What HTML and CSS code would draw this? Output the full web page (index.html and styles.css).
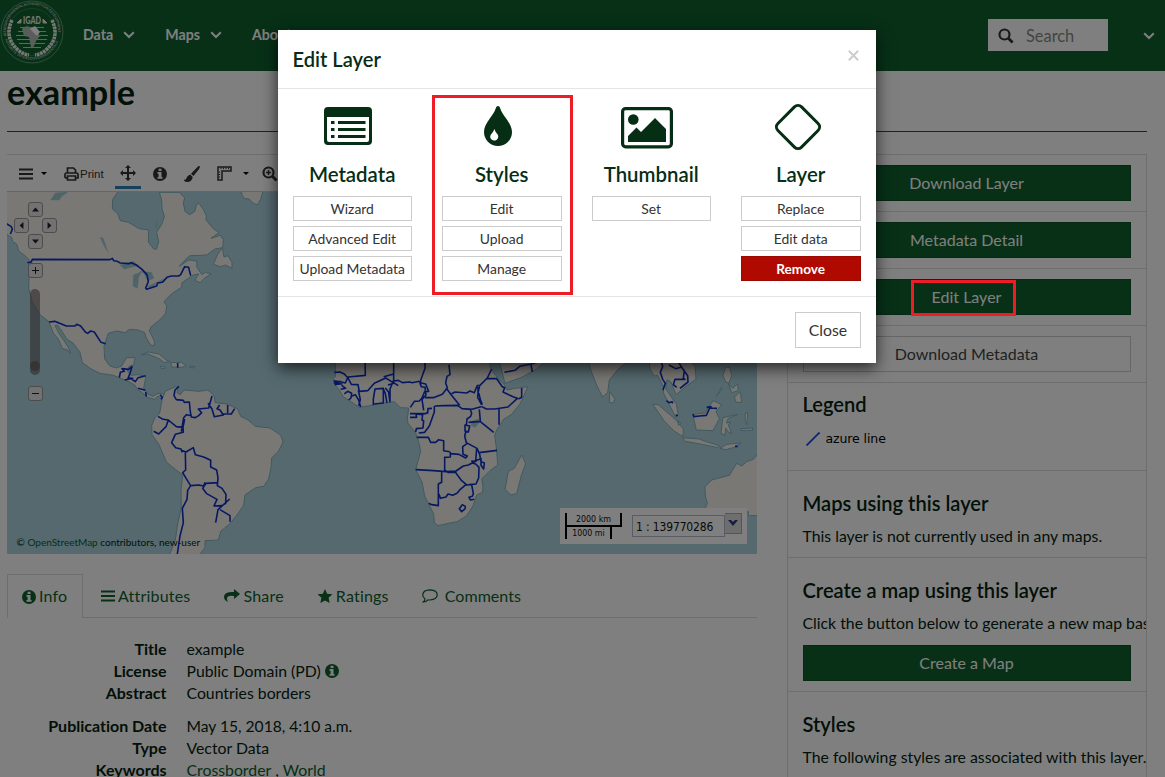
FILE: index.html
```html
<!DOCTYPE html>
<html lang="en">
<head>
<meta charset="utf-8">
<title>example</title>
<link rel="stylesheet" href="styles.css">
</head>
<body>
<svg class="defs" width="0" height="0">
  <symbol id="chev" viewBox="0 0 12 8"><path d="M1.2 1.2 6 6l4.800-4.800" fill="none" stroke="currentColor" stroke-width="2"/></symbol>
  <symbol id="info" viewBox="0 0 14 14"><path fill="currentColor" fill-rule="evenodd" d="M7 0a7 7 0 1 0 0 14A7 7 0 0 0 7 0zM5.600 1.800h2.900v2.100H5.600zM4.500 5h4v5h1v1.700H4.500V10h1.100V6.700H4.500z"/></symbol>
  <symbol id="bars" viewBox="0 0 14 12"><path fill="currentColor" d="M0 .5h14v2H0zM0 5h14v2H0zM0 9.500h14v2H0z"/></symbol>
  <symbol id="glass" viewBox="0 0 16 16"><circle cx="6.500" cy="6.500" r="5" fill="none" stroke="currentColor" stroke-width="2.200"/><path d="m10.300 10.300 4.300 4.300" stroke="currentColor" stroke-width="2.800"/></symbol>
</svg>
<header class="nav">
  <svg class="logo" viewBox="0 0 64 64" fill="none" stroke="#e8eee9">
    <circle cx="32" cy="32" r="31" stroke-width="1" opacity=".4"/>
    <circle cx="32" cy="32" r="23.500" stroke-width=".5" opacity=".4"/>
    <path id="ring" d="M6.500 36A26 26 0 1 1 57.500 36"/>
    <path id="ring2" d="M5 39A28 28 0 0 0 59 39" stroke="none"/>
    <g class="ring-text"><text><textPath href="#ring" textLength="88">INTERGOVERNMENTAL AUTHORITY ON DEVELOPMENT</textPath></text><text><textPath href="#ring2" textLength="70">AUTORITÉ INTERGOUVERNEMENTALE</textPath></text></g>
    <path d="M20 27.500h24M18 31.500h28M16 35.500h32M17 39.500h30M19 43.500h26M23 47.500h18" stroke-width="1.100" opacity=".8"/>
    <path d="M12 20q-8 17 5 29 5 5 12 6M52 20q8 17-5 29-5 5-12 6" stroke-width="3.600" stroke-dasharray="2.800 .6"/>
    <path d="M17 23h4v-4zM47 23h-4v-4z" fill="#e8eee9"/>
    <path d="M22 29q3-4 8-2l4 2 6 7-4 5-3 7-2-1-2-10-5-1z" fill="#b4bdb7" stroke="none"/>
    <path d="m30 29 5-3 5 6-3 4z" fill="#fff" stroke="none"/>
    <text class="logo-name" x="23" y="24" textLength="18" lengthAdjust="spacingAndGlyphs">IGAD</text>
  </svg>
  <nav class="menu">
    <a>Data <svg><use href="#chev"/></svg></a>
    <a>Maps <svg><use href="#chev"/></svg></a>
    <a>About</a>
  </nav>
  <div class="search"><svg><use href="#glass"/></svg><span>Search</span></div>
  <svg class="user"><use href="#chev"/></svg>
</header>
<main class="page">
  <h1>example</h1>
  <div class="cols">
    <section class="left">
      <div class="toolbar">
        <svg class="t-bars"><use href="#bars"/></svg><i class="caret"></i>
        <svg class="t-print" viewBox="0 0 15 14"><path d="M3.500 6V1h6l2 2v3M1 11V7.500q0-1.500 1.500-1.500h10Q14 6 14 7.500V11h-2.500M3.500 9h8v4h-8zM3 11H1" fill="none" stroke="currentColor" stroke-width="1.700"/></svg><span class="print">Print</span>
        <span class="pan"><svg viewBox="0 0 16 16"><path fill="currentColor" d="m8 0 3 3H9v4h4V5l3 3-3 3V9H9v4h2l-3 3-3-3h2V9H3v2L0 8l3-3v2h4V3H5z"/></svg></span>
        <svg class="t-info"><use href="#info"/></svg>
        <svg class="t-brush" viewBox="0 0 16 16"><path fill="currentColor" d="M15.700.3q.7.800-1 3.200L9.500 10 7 7.700 13 1.500Q14.900-.4 15.700.3M6.300 8.500 8.700 11Q8 16 3 16-.3 16 0 13.500q2 1 2.500-1.500t3.800-3.500"/></svg>
        <svg class="t-ruler" viewBox="0 0 15 15"><path d="M1 1h13v4H5v9H1z" fill="none" stroke="currentColor" stroke-width="1.500"/><path d="M4 1.500v1.700m2.500-1.700v1.700m2.500-1.700v1.700m2.500-1.700v1.700M1.500 6h1.700M1.500 8.500h1.700M1.500 11h1.700" stroke="currentColor"/></svg><i class="caret c2"></i>
        <svg class="t-zoom" viewBox="0 0 16 16"><use href="#glass"/><path d="M4 6.500h5M6.500 4v5" stroke="currentColor" stroke-width="1.500"/></svg>
      </div>
      <div class="map">
        <svg class="world" viewBox="7 191 750 363">
          <g transform="translate(0 140) scale(.33333)">
            <g class="land">
              <path d="M15 140V280L35 292 38 305 50 312 56 333 75 347 94 366 85 375 88 388 86 445 97 486 120 524 147 545 160 580 175 597 187 625 203 630 212 641 206 624 190 599 178 582 165 557 172 555 187 575 200 597 220 610 240 637 247 668 275 688 300 700 340 706 360 714 384 724 404 735 414 750 427 758 445 773 465 778 474 768 487 777 491 762 474 760 459 769 442 762 431 744 438 709 415 704 393 706 382 694 386 680 401 674 405 653 380 653 365 678 350 684 330 678 314 657 312 619 325 580 350 573 375 578 388 568 414 570 434 578 440 596 453 616 463 617 463 603 448 573 453 561 481 538 497 520 500 497 492 486 500 476 518 459 545 442 546 428 580 405 597 402 584 421 600 428 614 414 634 402 616 397 606 404 591 383 590 363 566 360 538 379 557 358 570 347 605 346 620 345 645 327 668 323 670 299 661 286 633 295 657 278 640 266 618 240 619 228 610 208 597 190 590 193 584 215 568 224 555 214 550 189 554 174 538 157H478L485 180 486 206 493 229 486 251 470 277 476 305 469 328 460 326 445 306 446 270 418 266 385 247 361 242 353 220 337 207 338 178 354 155V140Z"/>
              <path d="m640 373 13-30 14-20 5 28 12-4 12 20v18l-20-10-15 5z"/><path d="m722 155 10 20 17 3 8 10 15 7 10-17 7-25zM425 644l20-8 32 6 22 18 12 5-20 2-12-10-35-15zM480 680l12 0 5 4-12 2zM512 668l32-1 15 11-15 4-28-1zM570 678l15 2-3 4-14-2z"/>
              <path d="M487 775 496 754 526 740 534 744 531 758 541 764 552 750 598 754 624 750 643 768 645 788 681 792 713 807 722 829 744 840 766 859 810 864 842 885 849 906 836 933 815 954 813 983 806 1017 791 1039 767 1043 735 1065 731 1096 713 1122 690 1151 663 1173 655 1200 615 1202 615 1223 597 1246H508L526 1200 533 1152 544 1102 543 1055 548 1005 526 988 499 966 477 914 456 884 455 857 465 832 479 820Z"/>
            </g>
            <g class="lakes"><path d="M152 180 166 159 205 155 184 170 178 180zM300 292l10 3 14 42-12-20zM360 375l40-11 15 13-30 7-12 4zM400 405l25-10-9 17-3 33-14-6zM419 394l35 3 8 17-18 9-13-24zM440 440l33-14-15 16zM470 428l20-12-6 10zM462 263l10-20v18z"/></g>
            <g class="borders">
              <path d="M18 250 34 260 37 268 31 282M82 368 94 366 97 358 330 359 337 355 341 362 352 364 361 369 386 371 394 368 409 375 426 388 441 404 445 425 437 444 440 448 470 438 473 429 487 427 501 412 514 408 536 408 542 404 554 380 566 382 572 407M147 546 164 544 199 558H225L230 553 242 558 256 576 263 580 272 573 283 576 303 607 317 611"/>
              <path d="M358 713l3-16 12-3-7-8 20 2 10-8-6 20-6 15 14 0-24 5M388 713l18 12 8-12 23-6M414 745l22 6M437 756l2 14M480 764l7 8-4 6M533 669v14"/>
              <path d="M537 739 525 750 522 767 529 779 550 781 553 787 568 786 571 816 574 831 586 833 596 827 605 818 595 807 626 804 636 768M474 829l15 9 16 2-7 20-22 22-15-8M505 840l24 20 20 2 1 15-24 6-11 25 12 15 16 4 4 10M544 875l7-42 8-9 16 3M549 861l5-24M624 790l12 17 7 23 27-5-10-15-9-4 8-11M683 795v24M670 822h24l10-16M544 931l14 5 22-13 6 21 25 7 21 10v20l18 9 4 23-2 24 14 8 12 18-1 27-11 7-24 1 9-20-31-17-12-16 10-15 34-2M556 936l1 54-9 8 14 23 10 16 24-2 15 3 4-11M572 1037l-9 14-2 27-14 27 3 43-10 40-8 54M689 1077l-35 32-7 39M660 1109l30 18v18"/>
            </g>
          </g>
          <g transform="translate(270 350) scale(.33333)">
            <g class="land"><path d="M196 30V80L190 86 196 106 207 119 220 140 234 149 268 172 305 166 318 161 352 158 373 155 391 173 416 174 412 206 414 220 436 247 446 275 452 304 437 360 456 396 464 438 491 492 493 517 504 527 535 520 562 515 590 497 609 468 620 435 638 427 639 408 635 387 660 362 683 345 680 300 674 256 680 240 702 207 725 193 750 162 774 110 735 115 711 120 702 103 684 85 665 60 655 30ZM687 30l18 70 50-18 45-25 30-27zM755 315l12 26-13 35-14 55-18 4-17-17 4-20 6-34 18-9z"/></g>
            <g class="lakes"><path d="m604 214 22-8v14l-10 12-12-5zM586 240l5 22M585 267l3 14"/></g>
            <g class="borders">
              <path d="M285 30l1 46-52 5-8 18-15-4-20-3M193 67l17-1 13 6 11 12 10 19 20 1 4 20 25-2 20-22 34-16 8 5 30 18M192 96l23 6-22-3 20-5M194 104l20-3M215 106l12 9-15 3M223 132l10-8 12 6-2 14-7 6M246 138l10-4 10 16 6 21M265 120l6 29-5 18M310 166v-19l5-30 25-2v44l-27 3M340 117l6 14 5 28M346 114l10 13 4 30M371 30v42l-30 8M371 72v28l-17 5M360 155v-38l10-24 15-2 12 7 22-2 8 2 20-4 10 6 10 2 9 22-12 1-8 19-8 9-15 1-12 18M465 30v25l-12 33-3 12 4 10 11 2 3 23-12 13 5 33M465 143l25 0 27-10 15-20-5-14 4-20 9-5-3-30M530 116l14 19 25 31M545 131l10-5 35 3 10-6 13 5 8-20 5-3M624 111v15l3 6 5 20 5 12M665 57l-13 27-23 23-5 22-1 13 12 23M648 86h32l17 24 7 3-5 13 30 14 13 5-28 26-40 6-25 0-15-8M755 114v28l-10 5M494 168l29-1 40-1 13 10 30 2 27-8M493 168v18l-15 42-14 19-18 2M473 191l1-15 12-1M420 191l47 0 6-5M420 202l20 0-2-10 20 2-2 16 5 2-2 22-20 2-2 10M440 262h35l7 15 15 0 9-8 15 3v30l18 3M541 305v16l-17 1 0 38 10 7 25 0M601 179l4 11-3 9-11 8-2 21M628 178l3 36-35 3M631 215l40 32M687 177v47M585 225l14 3-4 18-10-3zM588 243l-4 15 5 20 32 17 8 18 4 22 10 4-2 18-8-11 0-20-28 10M591 281l-13 9 1 23 13 5-5 6-20-11-26-2M627 308l54-7M437 359l54 3 37 3 30-2 22-15 15-3 25-13M620 295l-3 38M515 367v30l-10 5v65l-20-3-9-4M507 432l4 13 17-4 6-9 14 4 13-6 10-12 14-12 12-2 21-2 8-18 1-32-10-10-8-2-4-9M556 366l9 13 10 13 17 14M605 404l5 27-3 8-10 3 4 8 12-2M577 464l9 5-1 8-10 8-7-9zM703 67l32-6 14-12 35-7 20-7M783 44l4 22"/>
            </g>
          </g>
          <g transform="translate(540 350) scale(.33333)">
            <g class="land"><path d="M144 30 154 65 172 110 188 141 203 127 208 90 234 58 270 30ZM209 124l16 24-6 11-11-2zM329 30v24l13 24 11-2 17 34 1 20 14 28 22 43 8-7-6-31-32-47 4-27 12 7 15 38 32-27 28-19-2-37-25-30V30ZM338 162l18 3 52 45 22 27-1 23-27-17-30-31zM428 263l50 4 18 7 42 13-4 6-43-9-55-10zM458 193l37-4 24-37 26 12-17 20 10 22-19 36-50-2zM540 295l20-12 43-4-20 13-25 7zM495 475 502 460 496 438 495 410 515 390 568 376 590 340 605 348 620 335 640 328 657 308V497H625V485L500 475ZM557 52h12l6 25-8 22-10-3-8-21zM583 142l18-18 4 33-17 0zM565 100l13 15 15-13 2 20-20 6zM528 139l17-27-1 8-15 20zM549 203l45-10-30 13-5 13 14-2-8 7 10 27-10-5-8-12-2 22-12-6 4-35zM615 190l8-2-2 36-5-14zM603 236l35-2-1 7-34 0zM415 211l7 11-7 4z"/></g>
            <g class="borders"><path d="M363 30l5 20-7 17 7 21 8 12-7 20M379 152l8 6 9-3 2 5M407 196h7M387 45l20 11 17-5 9 11-3 22 5 4h-30l-5 16 10 8M420 115l24-19-1-19-18-25-13-22M459 192l3 8 17-2 20-2 10-22 22 1M500 172l15-2M585 289h8"/></g>
          </g>
        </svg>
        <div class="zoomer">
          <b class="z up"><svg viewBox="0 0 9 5"><path d="m0 5 4.500-5L9 5z"/></svg></b><b class="z lf"><svg viewBox="0 0 5 9"><path d="M5 0 0 4.500 5 9z"/></svg></b><b class="z rt"><svg viewBox="0 0 5 9"><path d="m0 0 5 4.500L0 9z"/></svg></b><b class="z dn"><svg viewBox="0 0 9 5"><path d="m0 0 4.500 5L9 0z"/></svg></b>
          <b class="z in"><svg viewBox="0 0 7 7"><path d="M0 3h7v1H0zM3 0h1v7H3z"/></svg></b><span class="track"><i></i></span><b class="z out"><svg viewBox="0 0 7 7"><path d="M0 3h7v1H0z"/></svg></b>
        </div>
        <div class="credit">© <a>OpenStreetMap</a> contributors, new-user</div>
        <div class="scale">
          <div class="bars"><span class="km">2000 km</span><span class="mi">1000 mi</span></div>
          <span class="ratio">1 : 139770286</span><span class="drop"><svg viewBox="0 0 10 7"><path d="M0 0h3l2 2 2-2h3L5 6z" fill="#2a3f76"/></svg></span>
        </div>
      </div>
      <div class="tabs">
        <a class="tab on"><svg><use href="#info"/></svg><span>Info</span></a>
        <a class="tab attr"><svg><use href="#bars"/></svg><span>Attributes</span></a>
        <a class="tab share"><svg viewBox="0 0 16 14"><path fill="currentColor" d="M10 0 16 5l-6 5V7Q3 6 3 9.500q0 2 1 3.500Q0 11 0 8q0-5.500 10-5z"/></svg><span>Share</span></a>
        <a class="tab rate"><svg viewBox="0 0 16 15"><path fill="currentColor" d="m8 0 2.300 5 5.700.6-4.200 3.800L13 15l-5-2.800L3 15l1.200-5.600L0 5.600 5.700 5z"/></svg><span>Ratings</span></a>
        <a class="tab comm"><svg viewBox="0 0 16 14"><path fill="none" stroke="currentColor" stroke-width="1.200" d="M8 .8q7.200.4 7.200 5T8 11q-1 0-2-.2Q4 13 1.300 13q1.700-1.300 1.700-3.200Q.8 8.500.8 6 .8 1 8 .8z"/></svg><span>Comments</span></a>
      </div>
      <dl class="meta">
        <dt>Title</dt><dd>example</dd>
        <dt>License</dt><dd>Public Domain (PD) <svg><use href="#info"/></svg></dd>
        <dt>Abstract</dt><dd>Countries borders</dd>
        <dt class="gap">Publication Date</dt><dd class="gap date">May 15, 2018, 4:10 a.m.</dd>
        <dt>Type</dt><dd>Vector Data</dd>
        <dt>Keywords</dt><dd><a>Crossborder</a> , <a>World</a></dd>
      </dl>
    </section>
    <aside class="right">
      <div class="item"><a class="btn green">Download Layer</a></div>
      <div class="item"><a class="btn green">Metadata Detail</a></div>
      <div class="item"><a class="btn green">Edit Layer</a></div>
      <div class="item"><a class="btn plain">Download Metadata</a></div>
      <div class="item legend"><h4>Legend</h4><p><svg viewBox="0 0 14 14"><path d="M.5 13.500 13.500.5" stroke="#2347dc" stroke-width="1.800"/></svg>azure line</p></div>
      <div class="item used"><h4>Maps using this layer</h4><p>This layer is not currently used in any maps.</p></div>
      <div class="item create"><h4>Create a map using this layer</h4><p>Click the button below to generate a new map based on this layer.</p><a class="btn green">Create a Map</a></div>
      <div class="item sty"><h4>Styles</h4><p>The following styles are associated with this layer.</p></div>
    </aside>
  </div>
</main>
<div class="backdrop"></div>
<div class="mark mark-edit"></div>
<div class="modal">
  <div class="m-head"><h4>Edit Layer</h4><svg viewBox="0 0 11 11"><path d="m.8.800 9.400 9.400M10.200.800.8 10.200" stroke="#ccc" stroke-width="2"/></svg></div>
  <div class="m-body">
    <div class="col"><div class="ico"><svg class="i-meta" viewBox="0 0 48 38"><path fill="currentColor" fill-rule="evenodd" d="M4 0h40q4 0 4 4v30q0 4-4 4H4q-4 0-4-4V4q0-4 4-4M3 10v23q0 2 2 2h38q2 0 2-2V10z"/><path d="M7 15.500h3.500m3.500 0h27.500M7 22.500h3.500m3.500 0h27.500M7 29.500h3.500m3.500 0h27.500" stroke="currentColor" stroke-width="3"/></svg></div><h4>Metadata</h4><a>Wizard</a><a>Advanced Edit</a><a>Upload Metadata</a></div>
    <div class="col"><div class="ico"><svg class="i-drop" viewBox="0 0 28 40"><path fill="currentColor" fill-rule="evenodd" d="M14 0q1.600 0 2.200 2.200C18.200 9.500 28 17 28 26a14 14 0 0 1-28 0C0 17 9.800 9.500 11.800 2.200Q12.400 0 14 0M10.400 23q-.7 2.200-2.400 4.300A4 4 0 1 0 13.300 28q-2.200-2.500-2.900-5"/></svg></div><h4>Styles</h4><a>Edit</a><a>Upload</a><a>Manage</a><div class="mark mark-styles"></div></div>
    <div class="col"><div class="ico"><svg class="i-pic" viewBox="0 0 52 42"><rect x="1.600" y="1.600" width="48.800" height="38.200" rx="3" fill="none" stroke="currentColor" stroke-width="3.200"/><circle cx="12.300" cy="12.500" r="5.300" fill="currentColor"/><path fill="currentColor" d="M7 35v-6l8.500-8.500 4.500 4.500 14-14 11 11v13z"/></svg></div><h4>Thumbnail</h4><a>Set</a></div>
    <div class="col"><div class="ico"><svg class="i-dia" viewBox="0 0 48 48"><rect x="7.300" y="7.300" width="33.400" height="33.400" rx="5" transform="rotate(45 24 24)" fill="none" stroke="currentColor" stroke-width="3"/></svg></div><h4>Layer</h4><a>Replace</a><a>Edit data</a><a class="danger">Remove</a></div>
  </div>
  <div class="m-foot"><a>Close</a></div>
</div>
</body>
</html>
```
FILE: styles.css
```css
* { box-sizing: border-box; }
body { margin: 0; width: 1165px; height: 777px; overflow: hidden; position: relative; background: #fff; color: #04220f; font: 15.800px/22px Lato, sans-serif; font-variant-ligatures: none; }
h1, h4, p, dl, dd { margin: 0; }
svg { display: block; flex: none; }
.defs { position: absolute; }
.nav { height: 71px; background: #0e602e; display: flex; align-items: center; color: #fff; }
.logo { width: 64px; height: 64px; margin-top: -7px; }
.ring-text, .logo-name { fill: #e8eee9; stroke: none; font: 700 3.500px Lato, sans-serif; }
.ring-text { opacity: .75; }
#ring { stroke: none; }
.logo-name { font-size: 11px; font-weight: 900; }
.menu { display: flex; gap: 30px; margin: -1px 0 0 19px; font-weight: 700; font-size: 14.200px; }
.menu a { display: flex; align-items: center; gap: 10px; }
.menu svg, .user { width: 12px; height: 8px; }
.search { margin: -2px 0 0 auto; width: 120px; height: 32px; background: #fff; display: flex; align-items: center; padding: 3px 0 0 10px; gap: 12px; color: #888; font-size: 16.400px; }
.search svg { width: 16px; height: 16px; color: #333; margin-top: -1px; }
.user { margin: 0 10px 0 35px; }
.page { padding: 0 18px 0 7px; }
h1 { height: 61px; border-bottom: 1px solid #0e602e; font-size: 34.200px; line-height: 42px; font-weight: 700; }
.cols { display: flex; gap: 30px; margin-top: 22px; }
.left { width: 750px; }
.toolbar { height: 38px; border-top: 1px solid #d8dde4; border-bottom: 1px solid #ccc; display: flex; align-items: center; padding: 1px 0 0 12px; color: #333; }
.t-bars { width: 14px; height: 12px; }
.caret { border: 3px solid transparent; border-top-color: #000; border-bottom: 0; margin-left: 8px; }
.t-print { width: 15px; height: 14px; margin-left: 17px; }
.print { font: 11.500px "Liberation Sans", sans-serif; width: 24px; margin: 1px 0 0 1px; }
.pan { align-self: stretch; width: 26px; border-bottom: 3px solid #2a83b8; margin: 3px 0 2px 11px; display: grid; place-items: center; }
.pan svg { width: 16px; height: 16px; }
.t-info { width: 14px; height: 14px; margin-left: 12px; }
.t-brush { width: 16px; height: 16px; margin-left: 17px; }
.t-ruler { width: 15px; height: 15px; margin-left: 17px; }
.c2 { margin-left: 11px; }
.t-zoom { width: 16px; height: 16px; margin-left: 13px; }
.map { height: 362px; background: #aad3df; position: relative; overflow: hidden; }
.world { width: 750px; height: 363px; margin-top: -1px; }
.land { fill: #f5f0e9; stroke: #7fb4be; stroke-width: 3; stroke-linejoin: round; }
.lakes { fill: #9dc8d1; stroke: #9dc8d1; }
.borders { fill: none; stroke: #0b30c5; stroke-width: 4.800; stroke-linejoin: round; }
.zoomer { position: absolute; left: 0; top: 0; }
.z { position: absolute; width: 15px; height: 15px; border: 1px solid #999; border-radius: 3px; background: #e4e4e4; display: grid; place-items: center; fill: #222; }
.z svg { width: 7px; height: 7px; }
.up { left: 21px; top: 10px; } .lf { left: 7px; top: 26px; } .rt { left: 35px; top: 26px; } .dn { left: 21px; top: 42px; }
.in { left: 21px; top: 71px; } .out { left: 21px; top: 194px; }
.track { position: absolute; left: 23px; top: 97px; width: 10px; height: 86px; border-radius: 5px; background: rgba(105,100,100,.65); }
.track i { display: block; width: 10px; height: 10px; border-radius: 5px; background: #6e6868; margin-top: 72px; }
.credit { position: absolute; left: 9.500px; bottom: 1px; font-size: 10px; line-height: 21px; white-space: nowrap; }
.credit a, .meta a { color: #0e602e; }
.scale { position: absolute; left: 553px; top: 316px; width: 187px; height: 36px; background: #fff; display: flex; padding: 5px; color: #111; }
.bars { width: 57px; }
.bars span { display: block; height: 14px; border: 2px solid #000; border-top: 0; text-align: center; font: 8.800px/12px "DejaVu Sans Condensed", "DejaVu Sans", sans-serif; white-space: nowrap; }
.bars .mi { border-top: 0; border-bottom: 0; width: 47px; height: 12px; line-height: 12px; }
.ratio { margin: 2px 0 0 10px; width: 93px; height: 22px; border: 1px solid #b5b8c8; padding-left: 3px; font: 12px/22px "DejaVu Sans Condensed", "DejaVu Sans", sans-serif; letter-spacing: -.15px; white-space: nowrap; }
.drop { width: 17px; height: 21px; border: 1px solid #aaa; border-left: 0; background: #ddd; display: grid; place-items: center; }
.drop svg { width: 10px; height: 7px; }
.tabs { margin-top: 20px; height: 44px; border-bottom: 1px solid #ddd; display: flex; color: #0e602e; }
.tab { display: flex; align-items: center; gap: 3px; font-size: 16px; letter-spacing: .2px; }
.tab svg { width: 14px; height: 14px; }
.tab.on { width: 76px; height: 44px; border: 1px solid #ddd; border-bottom: 0; background: #fff; padding-left: 14px; margin-right: 18px; }
.tab.on span { margin-top: -2px; }
.tab.share { margin-left: 34px; } .tab.rate { margin-left: 33px; } .tab.comm { margin-left: 33px; gap: 7px; letter-spacing: .05px; }
.share svg, .rate svg, .comm svg { width: 16px; }
.meta { margin-top: 20px; display: grid; grid-template-columns: 159.500px auto; column-gap: 20px; white-space: nowrap; }
dt { text-align: right; font-weight: 700; font-size: 16px; }
dd { display: flex; gap: 4px; align-items: center; }
dd svg { width: 14px; height: 14px; color: #0e602e; }
.date { font-size: 15.600px; }
.gap { margin-top: 11px; }
.right { width: 360px; height: 640px; border: 1px solid #ddd; overflow: hidden; white-space: nowrap; }
.item { height: 57px; border-bottom: 1px solid #ddd; padding: 10px 15px; }
.btn { display: block; height: 36px; text-align: center; font-size: 16px; border: 1px solid #0b5227; line-height: 33px; padding-right: 1px; }
.green { background: #0e602e; color: #fff; }
.plain { border-color: #ccc; color: #444; }
h4 { font-size: 20.100px; line-height: 24px; font-weight: 600; }
.item h4 { margin: -1px 0 0 -.5px; }
.item p { margin: 10px 0 0 -.5px; }
.legend { height: 88px; }
.legend p { margin-top: 12px; display: flex; gap: 6px; align-items: center; padding-left: 3px; font: 12.500px/22px "DejaVu Sans", sans-serif; letter-spacing: -.1px; color: #000; }
.legend svg { width: 14px; height: 14px; }
.used { height: 87px; padding-top: 21px; }
.create { height: 134px; padding-top: 21px; }
.create .btn { margin-top: 11px; }
.sty { height: 120px; padding-top: 21px; }
.backdrop { position: absolute; inset: 0; background: rgba(0,0,0,.5); }
.mark { position: absolute; border: 3px solid #ee1c24; }
.mark-edit { left: 911px; top: 280px; width: 105px; height: 36px; }
.mark-styles { left: 4.600px; top: 6px; width: 141px; height: 200px; }
.modal { position: absolute; left: 278px; top: 30px; width: 598px; height: 333px; background: #fff; box-shadow: 0 5px 15px rgba(0,0,0,.7); color: #052e15; }
.m-head { height: 59px; border-bottom: 1px solid #e5e5e5; display: flex; justify-content: space-between; padding: 17px 17px 0 14.500px; }
.m-head svg { width: 11px; height: 11px; margin-top: 3px; }
.m-body { display: flex; height: 208px; border-bottom: 1px solid #e5e5e5; margin-left: -.1px; }
.col { position: relative; width: 149.500px; padding: 8px 15px 0; text-align: center; }
.ico { height: 60px; display: grid; place-items: center; }
.i-meta { width: 48px; height: 38px; margin: 0 9px 2px 0; }
.i-drop { width: 28px; height: 40px; margin: 0 9px 2px 0; }
.i-pic { width: 52px; height: 42px; margin: 2px 9px 0 0; }
.i-dia { width: 48px; height: 48px; margin: 0 6px 0 0; }
.col h4 { font-size: 20.400px; margin: 5px -.5px 10px -1.500px; }
.col a, .m-foot a { display: block; border: 1px solid #ccc; color: #333; background: #fff; white-space: nowrap; }
.col a { height: 25px; margin-bottom: 5px; padding-right: 1px; font-size: 13.900px; line-height: 24px; }
.col .danger { background: #b00a00; border-color: #9c0900; color: #fff; font-weight: 700; font-size: 13.600px; }
.m-foot { display: flex; justify-content: flex-end; padding: 15px; }
.m-foot a { width: 66px; height: 36px; line-height: 34px; text-align: center; font-size: 15.800px; }
```
